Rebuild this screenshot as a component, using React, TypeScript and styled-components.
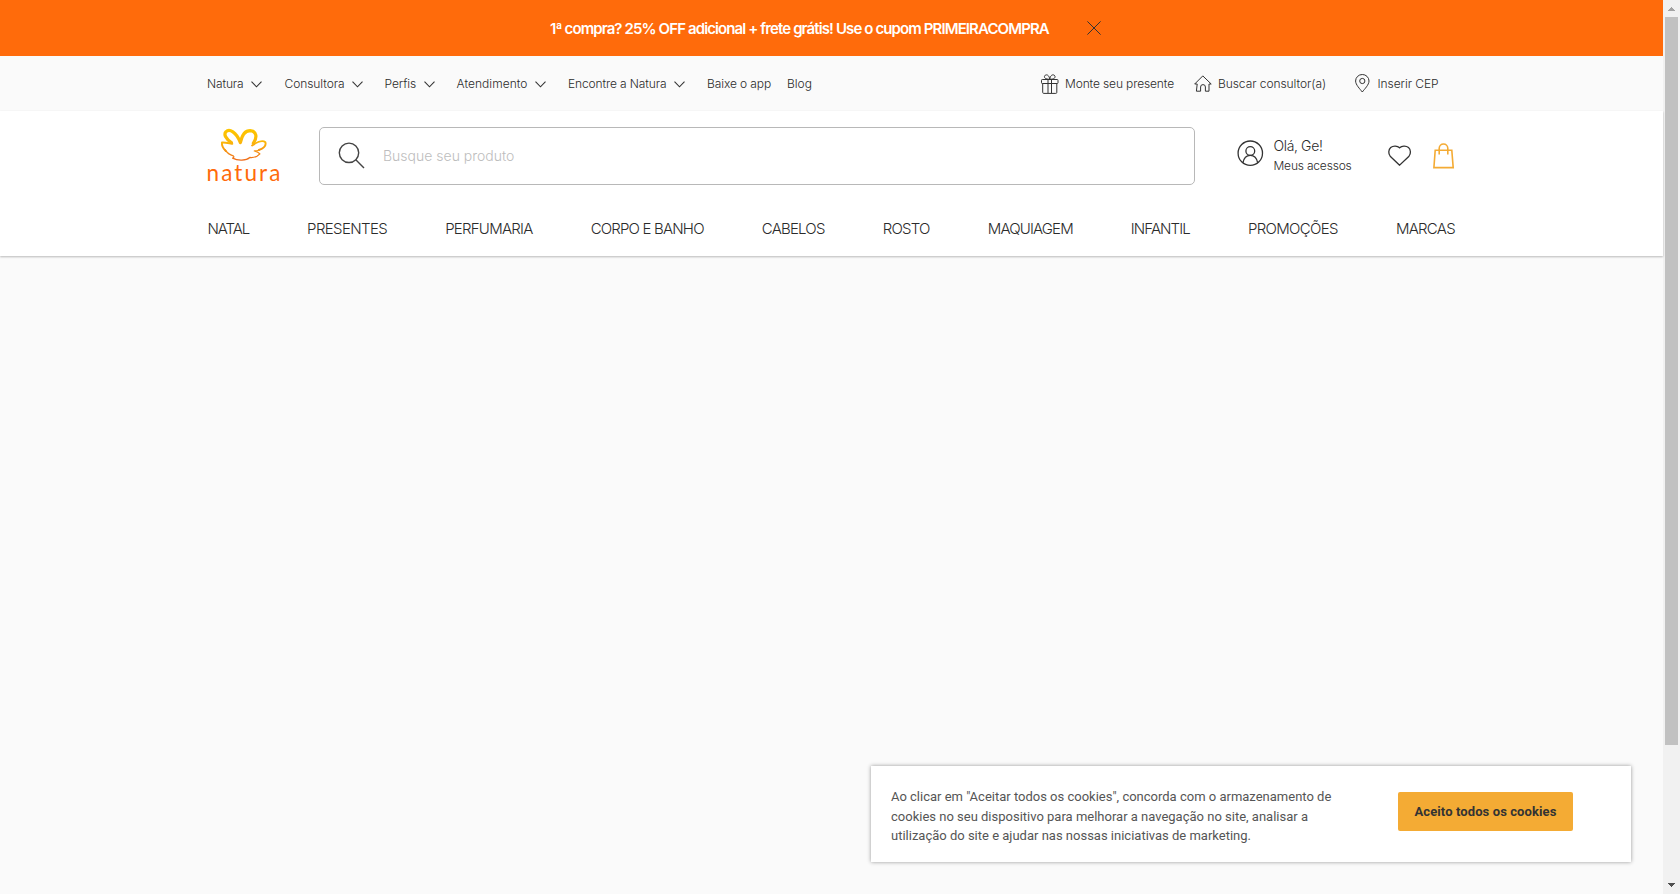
import React from 'react';
import styled, { createGlobalStyle } from 'styled-components';

const GlobalStyle = createGlobalStyle`
  * { box-sizing: border-box; }
  html, body { margin: 0; padding: 0; background: #fafafa; overflow: hidden; }
  body { font-family: Inter, 'Liberation Sans', sans-serif; font-weight: 300; color: #333; }
`;

const Screen = styled.div`
  display: flex;
  width: 1680px;
  height: 894px;
`;

const Page = styled.div`
  position: relative;
  flex: 1;
  min-width: 0;
  background: #fafafa;
`;

const Text = styled.span<{ $size: number; $track?: number; $weight?: number; $color?: string }>`
  font-size: ${(p) => p.$size}px;
  letter-spacing: ${(p) => p.$track ?? 0}px;
  font-weight: ${(p) => p.$weight ?? 300};
  color: ${(p) => p.$color ?? '#2b2b2b'};
  white-space: nowrap;
`;

const Banner = styled.div`
  display: flex;
  align-items: center;
  height: 56px;
  padding: 0 0 0 550px;
  background: #ff6b0b;
`;

const CloseButton = styled.button`
  display: flex;
  width: 14px;
  height: 14px;
  margin: -1px 0 0 38px;
  padding: 0;
  border: 0;
  background: none;
`;

const TopBar = styled.div`
  display: flex;
  align-items: center;
  height: 55px;
  padding: 0 0 0 207px;
  background: #fafafa;
`;

const TopLink = styled.a<{ $width: number }>`
  display: flex;
  align-items: center;
  gap: 7.5px;
  width: ${(p) => p.$width}px;
`;

const Shortcuts = styled.div`
  display: flex;
  align-items: center;
  margin-left: 227.5px;
`;

const Shortcut = styled.a<{ $width: number; $gap: number }>`
  display: flex;
  align-items: center;
  gap: ${(p) => p.$gap}px;
  width: ${(p) => p.$width}px;
`;

const Header = styled.header`
  height: 145px;
  background: #fff;
  box-shadow: 0 1px 2px rgba(0, 0, 0, 0.26);
`;

const HeaderRow = styled.div`
  display: flex;
  align-items: flex-start;
  padding: 16px 0 0 207px;
`;

const Logo = styled.a`
  display: flex;
  flex-direction: column;
  width: 112px;
  height: 58px;
`;

const Wordmark = styled.span`
  font-family: Lato, sans-serif;
  font-size: 22.5px;
  font-weight: 400;
  line-height: 24px;
  letter-spacing: 2.1px;
  margin: -1px 0 0 -0.5px;
  color: #ff6b0b;
`;

const SearchBox = styled.div`
  display: flex;
  align-items: center;
  width: 876px;
  height: 58px;
  padding: 0 0 1px 18px;
  gap: 18px;
  border: 1px solid #b8b8b8;
  border-radius: 5px;
`;

const Account = styled.a`
  display: flex;
  gap: 10px;
  margin: 9px 0 0 41.5px;
  width: 150.5px;
`;

const AccountLines = styled.div`
  display: flex;
  flex-direction: column;
  line-height: 20px;
`;

const HeartLink = styled.a`
  display: flex;
  margin: 18px 0 0 1px;
  width: 45px;
`;

const BagLink = styled.a`
  display: flex;
  margin-top: 16px;
`;

const Nav = styled.nav`
  display: flex;
  justify-content: space-between;
  width: 1247.5px;
  margin: 34px 0 0 207.5px;
  line-height: 20px;
`;

const CookieNotice = styled.div`
  position: absolute;
  right: 32px;
  bottom: 32px;
  display: flex;
  width: 760px;
  height: 96px;
  padding: 21px 0 0 20px;
  background: #fff;
  box-shadow: 0 0 4px rgba(0, 0, 0, 0.4);
  font-family: Roboto, sans-serif;
`;

const CookieText = styled.p`
  width: 507px;
  margin: 0;
  font-size: 13px;
  font-weight: 400;
  line-height: 19.5px;
  color: #555;
`;

const AcceptButton = styled.button`
  width: 175px;
  height: 39px;
  margin-top: 5px;
  padding: 0;
  border: 0;
  border-radius: 2px;
  background: #f4ab34;
  color: #333;
  font-family: Roboto, sans-serif;
  font-size: 13px;
  font-weight: 700;
  letter-spacing: 0.1px;
`;

const ScrollTrack = styled.div`
  display: flex;
  flex-direction: column;
  align-items: center;
  width: 17px;
  background: #f1f1f1;
`;

const ScrollThumb = styled.div`
  width: 13px;
  height: 728px;
  margin: 6px 0 137px;
  background: #c1c1c1;
`;

const Chevron = () => (
  <svg width="11" height="8" viewBox="0 0 11 8" fill="none" stroke="#333" strokeWidth="1.1">
    <path d="M0.5 1.6 5.5 6.8 10.5 1.6" />
  </svg>
);

const GiftIcon = () => (
  <svg width="18" height="20" viewBox="0 0 18 20" fill="none" stroke="#333">
    <rect x="0.5" y="5.5" width="16.5" height="4" rx="0.8" />
    <path d="M1.7 9.5V18.4a1 1 0 0 0 1 1H14.8a1 1 0 0 0 1-1V9.5M7 5.5V19M10.5 5.5V19" />
    <path d="M8.7 5.3C4.5 5.2 2.8 3.8 3.6 2 4.5 0 8.3.3 8.7 5.3ZM8.8 5.3C13 5.2 14.7 3.8 13.9 2 13 0 9.2.3 8.8 5.3Z" />
  </svg>
);

const HouseIcon = () => (
  <svg width="18" height="17" viewBox="0 0 18 17" fill="none" stroke="#333" strokeLinejoin="round" strokeLinecap="round">
    <path d="M2.8 9H.7L8.8.9 17.2 9H15V16.2H11.4V12a2.2 2.2 0 0 0-4.8 0V16.2H2.8Z" />
  </svg>
);

const PinIcon = () => (
  <svg width="15" height="19" viewBox="0 0 15 19" fill="none" stroke="#333">
    <path d="M7.3 18C5 15 .6 10.8.6 7a6.7 6.5 0 0 1 13.4 0C14 10.8 9.6 15 7.3 18Z" />
    <circle cx="7.3" cy="7" r="2.6" />
  </svg>
);

const SearchIcon = () => (
  <svg width="27" height="27" viewBox="0 0 27 27" fill="none" stroke="#444" strokeWidth="1.4">
    <circle cx="11" cy="10.8" r="9.7" />
    <path d="M17.8 17.8 26 26" />
  </svg>
);

const AccountIcon = styled.svg`
  flex: none;
  margin-top: 4px;
`;

const UserIcon = () => (
  <AccountIcon width="27" height="27" viewBox="0 0 27 27" fill="none" stroke="#333" strokeWidth="1.3">
    <circle cx="13.3" cy="13.2" r="12.2" />
    <circle cx="13.3" cy="11" r="4.4" />
    <path d="M5.9 22.8C6.8 17.9 9.6 15.3 13.3 15.3S19.8 17.9 20.7 22.8" />
  </AccountIcon>
);

const HeartIcon = () => (
  <svg width="24" height="22" viewBox="0 0 24 22" fill="none" stroke="#333" strokeWidth="1.3">
    <path d="M11.6 20.2 2.2 11.2C.2 8.8.3 4.6 2.7 2.5 5.3.3 9.4.7 11.6 2.8 13.8.7 17.9.3 20.5 2.5 22.9 4.6 23 8.8 21 11.2Z" />
  </svg>
);

const BagIcon = () => (
  <svg width="22" height="26" viewBox="0 0 22 26" fill="none" stroke="#f4ab34" strokeWidth="1.6">
    <path d="M2.2 7.2H18.8L20.2 24.6H.9Z" />
    <path d="M6.2 11.4V5.3a4.3 4.3 0 0 1 8.6 0v6.1" />
  </svg>
);

const FlowerMark = () => (
  <svg width="73" height="36" viewBox="51 51 219 108" fill="none" stroke="url(#petal)" strokeLinejoin="round" strokeLinecap="round">
    <defs>
      <linearGradient id="petal" gradientUnits="userSpaceOnUse" x1="0" y1="60" x2="0" y2="155">
        <stop offset="0" stopColor="#fdc500" />
        <stop offset="0.4" stopColor="#fbb70a" />
        <stop offset="1" stopColor="#ee6a1c" />
      </linearGradient>
    </defs>
    <path strokeWidth="10" d="M123 99C106 88 99 74 106 66C117 55 138 66 151 99C156 74 166 62 181 62C202 64 203 84 191 101" />
    <path strokeWidth="6" d="M187 108C203 97 220 91 228 98C231 108 222 117 208 122" />
    <path strokeWidth="6" d="M126 103C114 101 104 98 94 99C93 108 98 117 106 125" />
    <path strokeWidth="4" d="M210 121C205 124 199 125 194 125C201 127 207 129 211 134C204 142 192 146 180 145C169 155 143 156 127 147C131 145 132 143 129 140C117 137 109 130 103 121" />
  </svg>
);

const ScrollArrow = ({ up }: { up?: boolean }) => (
  <svg width="17" height="11" viewBox="0 0 17 11" fill={up ? '#a3a3a3' : '#505050'} shapeRendering="crispEdges">
    <path d={up ? 'M5 11 8.5 7 12 11Z' : 'M5 1H12L8.5 5Z'} />
  </svg>
);

const topLinks = [
  { label: 'Natura', width: 77.5, track: -0.13, menu: true },
  { label: 'Consultora', width: 100, track: -0.07, menu: true },
  { label: 'Perfis', width: 72, track: -0.09, menu: true },
  { label: 'Atendimento', width: 111.5, track: 0.04, menu: true },
  { label: 'Encontre a Natura', width: 139, track: -0.11, menu: true },
  { label: 'Baixe o app', width: 80, track: -0.1, menu: false },
  { label: 'Blog', width: 26, track: 0, menu: false },
];

const categories: [string, number][] = [
  ['NATAL', -1.1],
  ['PRESENTES', -0.62],
  ['PERFUMARIA', -0.74],
  ['CORPO E BANHO', -0.82],
  ['CABELOS', -0.77],
  ['ROSTO', -0.77],
  ['MAQUIAGEM', -0.86],
  ['INFANTIL', -0.9],
  ['PROMOÇÕES', -0.66],
  ['MARCAS', -0.73],
];

export default function App() {
  return (
    <Screen>
      <GlobalStyle />
      <Page>
        <Banner>
          <Text $size={15} $weight={600} $track={-0.89} $color="#fff">
            1ª compra? 25% OFF adicional + frete grátis! Use o cupom PRIMEIRACOMPRA
          </Text>
          <CloseButton aria-label="Fechar">
            <svg width="14" height="14" viewBox="0 0 14 14" stroke="#333" strokeWidth="1">
              <path d="M.4.4 13.6 13.6M13.6.4.4 13.6" />
            </svg>
          </CloseButton>
        </Banner>
        <TopBar>
          {topLinks.map((l) => (
            <TopLink key={l.label} $width={l.width}>
              <Text $size={12} $track={l.track}>{l.label}</Text>
              {l.menu && <Chevron />}
            </TopLink>
          ))}
          <Shortcuts>
            <Shortcut $width={153} $gap={6.5}>
              <GiftIcon />
              <Text $size={12} $track={-0.13}>Monte seu presente</Text>
            </Shortcut>
            <Shortcut $width={161} $gap={6.5}>
              <HouseIcon />
              <Text $size={12} $track={-0.06}>Buscar consultor(a)</Text>
            </Shortcut>
            <Shortcut $width={90} $gap={8}>
              <PinIcon />
              <Text $size={12} $track={-0.06}>Inserir CEP</Text>
            </Shortcut>
          </Shortcuts>
        </TopBar>
        <Header>
          <HeaderRow>
            <Logo>
              <FlowerMark />
              <Wordmark>natura</Wordmark>
            </Logo>
            <SearchBox>
              <SearchIcon />
              <Text $size={14} $color="#bdbdbd">Busque seu produto</Text>
            </SearchBox>
            <Account>
              <UserIcon />
              <AccountLines>
                <Text $size={14} $track={-0.37}>Olá, Ge!</Text>
                <Text $size={12} $track={-0.19}>Meus acessos</Text>
              </AccountLines>
            </Account>
            <HeartLink><HeartIcon /></HeartLink>
            <BagLink><BagIcon /></BagLink>
          </HeaderRow>
          <Nav>
            {categories.map(([label, track]) => (
              <Text key={label} $size={15} $track={track}>{label}</Text>
            ))}
          </Nav>
        </Header>
        <CookieNotice>
          <CookieText>
            Ao clicar em "Aceitar todos os cookies", concorda com o armazenamento de<br />
            cookies no seu dispositivo para melhorar a navegação no site, analisar a<br />
            utilização do site e ajudar nas nossas iniciativas de marketing.
          </CookieText>
          <AcceptButton>Aceito todos os cookies</AcceptButton>
        </CookieNotice>
      </Page>
      <ScrollTrack>
        <ScrollArrow up />
        <ScrollThumb />
        <ScrollArrow />
      </ScrollTrack>
    </Screen>
  );
}
